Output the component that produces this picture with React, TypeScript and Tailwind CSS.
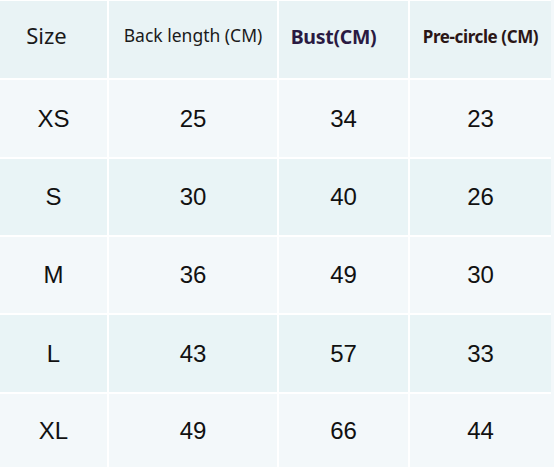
const rows = [
  { size: "XS", back: 25, bust: 34, pre: 23 },
  { size: "S", back: 30, bust: 40, pre: 26 },
  { size: "M", back: 36, bust: 49, pre: 30 },
  { size: "L", back: 43, bust: 57, pre: 33 },
  { size: "XL", back: 49, bust: 66, pre: 44 },
];

const cell = "flex items-center justify-center";

export default function App() {
  return (
    <div className="w-[554px] h-[467px] bg-[#f3f8fa] overflow-hidden">
      <div
        className="grid w-[551px] bg-white gap-[2px] pt-[1px] pr-[2px] grid-cols-[107px_168px_129px_141px] grid-rows-[77px_77px_76px_76px_77px_74px]"
        style={{ fontFamily: '"Liberation Sans", Arial, sans-serif' }}
      >
        <div className={`${cell} bg-[#e9f3f5] pr-[14px] pb-[8px] text-[22px] text-[#1a1a1a] font-['Noto_Sans',sans-serif]`}>
          Size
        </div>
        <div className={`${cell} bg-[#e9f3f5] pb-[8px] text-[17.5px] text-[#1a1a1a] font-['Noto_Sans',sans-serif]`}>
          Back length (CM)
        </div>
        <div className={`${cell} bg-[#e9f3f5] pr-[20px] pb-[6px] text-[19.5px] font-bold tracking-[-0.3px] text-[#2a1a42] font-['Noto_Sans',sans-serif]`}>
          Bust(CM)
        </div>
        <div className={`${cell} bg-[#e9f3f5] pb-[6px] text-[17px] font-bold tracking-[-0.4px] text-[#2b1616] font-['Noto_Sans',sans-serif]`}>
          Pre-circle (CM)
        </div>
        {rows.map((r, i) => {
          const bg = i % 2 === 0 ? "bg-[#f3f8fa]" : "bg-[#e9f4f6]";
          return [r.size, r.back, r.bust, r.pre].map((v, j) => (
            <div key={`${i}-${j}`} className={`${cell} ${bg} text-[24px] text-[#111]`}>
              {v}
            </div>
          ));
        })}
      </div>
    </div>
  );
}
